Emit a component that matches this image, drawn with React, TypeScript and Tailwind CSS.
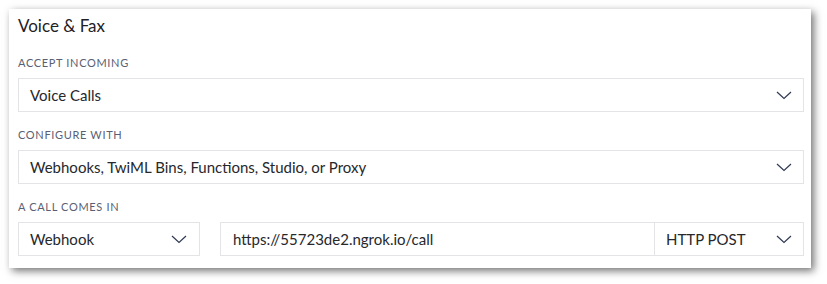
import React from "react";

function Chevron() {
  return (
    <svg width="16" height="9" viewBox="0 0 16 9" fill="none" className="shrink-0">
      <polyline points="1,1 8,7.5 15,1" stroke="#2f3a52" strokeWidth="1.2" />
    </svg>
  );
}

function Label({ children }: { children: React.ReactNode }) {
  return (
    <div className="text-[11px] leading-[14px] uppercase tracking-[0.06em] text-[#5a5f73]">
      {children}
    </div>
  );
}

function SelectBox({ value, className }: { value: string; className?: string }) {
  return (
    <div
      className={`h-[34px] flex items-center justify-between border border-[#e4e4e6] bg-white pl-[11px] pr-[11px] ${className ?? ""}`}
    >
      <span className="text-[15px] text-[#26282c]">{value}</span>
      <Chevron />
    </div>
  );
}

export default function App() {
  return (
    <div className="w-[827px] h-[284px] bg-white pl-[9px] pt-[9px]" style={{ fontFamily: "Lato, 'Open Sans', sans-serif" }}>
      <div className="w-[802px] h-[259px] bg-white shadow-[3px_3px_8px_rgba(0,0,0,0.55)] pl-[9px] pr-[7px]">
        <h1 className="pt-[5px] text-[17px] leading-[24px] text-[#1f2126]">Voice &amp; Fax</h1>

        <div className="mt-[18px] flex flex-col gap-[8px]">
          <Label>Accept Incoming</Label>
          <SelectBox value="Voice Calls" />
        </div>

        <div className="mt-[16px] flex flex-col gap-[8px]">
          <Label>Configure With</Label>
          <SelectBox value="Webhooks, TwiML Bins, Functions, Studio, or Proxy" />
        </div>

        <div className="mt-[16px] flex flex-col gap-[8px]">
          <Label>A Call Comes In</Label>
          <div className="flex">
            <SelectBox value="Webhook" className="w-[182px] pr-[12px]" />
            <div className="ml-[20px] flex-1 h-[34px] flex items-center border border-[#e4e4e6] pl-[12px] text-[15px] text-[#26282c]">
              https://55723de2.ngrok.io/call
            </div>
            <SelectBox value="HTTP POST" className="w-[149px] border-l-0" />
          </div>
        </div>
      </div>
    </div>
  );
}
